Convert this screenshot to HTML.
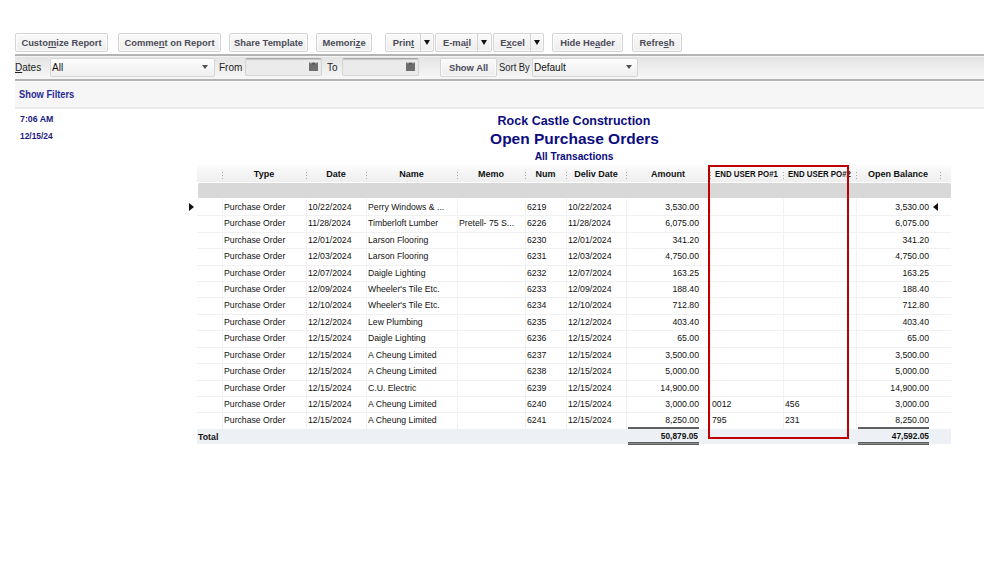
<!DOCTYPE html><html><head><meta charset="utf-8"><style>

html,body{margin:0;padding:0;background:#fff;width:999px;height:562px;overflow:hidden;position:relative;font-family:"Liberation Sans", sans-serif;}
div,span{box-sizing:border-box;}
.a{position:absolute;white-space:nowrap;}
.btn{position:absolute;height:19px;top:33px;border:1px solid #d4d4d4;border-radius:2px;background:linear-gradient(#fafafa,#ededed);box-shadow:inset 0 0 0 1px rgba(255,255,255,0.7);color:#4b4b57;font-weight:bold;font-size:9.4px;line-height:18px;text-align:center;}
.btn u{text-decoration:underline;}
.sep{position:absolute;top:0;bottom:0;width:1px;background:#d8d8d8;}
.dd{position:absolute;font-size:8px;color:#222;}
.t{position:absolute;font-size:8.7px;color:#111;white-space:nowrap;line-height:10px;}
.h{position:absolute;font-size:9px;font-weight:bold;color:#111;white-space:nowrap;line-height:10px;text-align:center;}
.dots{position:absolute;width:1px;height:9px;background:repeating-linear-gradient(#a8a8a8 0 1px,transparent 1px 3px);}

</style></head><body>
<div class="btn" style="left:15px;width:93px">Custo<u>m</u>ize Report</div>
<div class="btn" style="left:118px;width:103px">Comme<u>n</u>t on Report</div>
<div class="btn" style="left:229px;width:79px">Share Template</div>
<div class="btn" style="left:316px;width:56px">Memori<u>z</u>e</div>
<div class="btn" style="left:552px;width:71px">Hide He<u>a</u>der</div>
<div class="btn" style="left:632px;width:50px">Refre<u>s</u>h</div>
<div class="btn" style="left:385px;width:49px;text-align:left"><span class="a" style="left:0;width:35px;text-align:center">Prin<u>t</u></span><span class="a" style="left:34px;top:0;bottom:0;width:1px;background:#d4d4d4"></span><svg class="a" style="left:38px;top:6px" width="6" height="5" viewBox="0 0 6 5"><polygon points="0,0 6,0 3,5" fill="#111"/></svg></div>
<div class="btn" style="left:435px;width:57px;text-align:left"><span class="a" style="left:0;width:42px;text-align:center">E-ma<u>i</u>l</span><span class="a" style="left:41px;top:0;bottom:0;width:1px;background:#d4d4d4"></span><svg class="a" style="left:45px;top:6px" width="6" height="5" viewBox="0 0 6 5"><polygon points="0,0 6,0 3,5" fill="#111"/></svg></div>
<div class="btn" style="left:493px;width:51px;text-align:left"><span class="a" style="left:0;width:37px;text-align:center">E<u>x</u>cel</span><span class="a" style="left:36px;top:0;bottom:0;width:1px;background:#d4d4d4"></span><svg class="a" style="left:40px;top:6px" width="6" height="5" viewBox="0 0 6 5"><polygon points="0,0 6,0 3,5" fill="#111"/></svg></div>
<div class="a" style="left:15px;top:54px;width:969px;height:2px;background:#b4b4b4"></div>
<div class="a" style="left:15px;top:56px;width:969px;height:23px;background:linear-gradient(#e3e3e3,#f7f7f7)"></div>
<div class="a" style="left:15px;top:56px;width:969px;height:1px;background:#f4f4f4"></div>
<div class="a" style="left:15px;top:79px;width:969px;height:2px;background:#b4b4b4"></div>
<div class="a" style="left:15px;top:81px;width:969px;height:27px;background:#f6f6f6"></div>
<div class="a" style="left:15px;top:81px;width:969px;height:1px;background:#fbfbfb"></div>
<div class="a" style="left:15px;top:107px;width:969px;height:2px;background:#ebebeb"></div>
<div class="a" style="left:15px;top:62px;font-size:10px;color:#222;line-height:12px"><u>D</u>ates</div>
<div class="a" style="left:50px;top:58px;width:165px;height:19px;border:1px solid #d6d6d6;border-radius:2px;background:linear-gradient(#fdfdfd,#efefef)"></div>
<div class="a" style="left:52px;top:62px;font-size:10px;color:#111;line-height:12px">All</div>
<div class="a" style="left:202px;top:65px;width:0;height:0;border-left:3px solid transparent;border-right:3px solid transparent;border-top:4px solid #505050"></div>
<div class="a" style="left:219px;top:62px;font-size:10px;color:#222;line-height:12px">From</div>
<div class="a" style="left:245px;top:58px;width:77px;height:18px;border:1px solid #d4d4d4;border-top-color:#a8a8a8;border-radius:2px;background:#ebebeb;box-shadow:inset 0 1px 1px #c8c8c8"></div>
<svg class="a" style="left:309px;top:62px" width="9" height="9" viewBox="0 0 9 9"><rect x="0" y="0.5" width="9" height="8.5" fill="#6e6e6e"/><rect x="1.5" y="0" width="1" height="1.5" fill="#d8d8d8"/><rect x="6.5" y="0" width="1" height="1.5" fill="#d8d8d8"/><rect x="3" y="1" width="3" height="1.5" fill="#555"/></svg>
<div class="a" style="left:327px;top:62px;font-size:10px;color:#222;line-height:12px">To</div>
<div class="a" style="left:342px;top:58px;width:77px;height:18px;border:1px solid #d4d4d4;border-top-color:#a8a8a8;border-radius:2px;background:#ebebeb;box-shadow:inset 0 1px 1px #c8c8c8"></div>
<svg class="a" style="left:406px;top:62px" width="9" height="9" viewBox="0 0 9 9"><rect x="0" y="0.5" width="9" height="8.5" fill="#6e6e6e"/><rect x="1.5" y="0" width="1" height="1.5" fill="#d8d8d8"/><rect x="6.5" y="0" width="1" height="1.5" fill="#d8d8d8"/><rect x="3" y="1" width="3" height="1.5" fill="#555"/></svg>
<div class="btn" style="left:440px;top:58px;width:57px;height:19px;line-height:17px">Show All</div>
<div class="a" style="left:499px;top:62px;font-size:10px;color:#222;line-height:12px;transform:scaleX(0.94);transform-origin:0 0">Sort By</div>
<div class="a" style="left:532px;top:58px;width:106px;height:19px;border:1px solid #d6d6d6;border-radius:2px;background:linear-gradient(#fdfdfd,#efefef)"></div>
<div class="a" style="left:534px;top:62px;font-size:10px;color:#111;line-height:12px">Default</div>
<div class="a" style="left:626px;top:65px;width:0;height:0;border-left:3px solid transparent;border-right:3px solid transparent;border-top:4px solid #505050"></div>
<div class="a" style="left:19px;top:89px;font-size:10px;font-weight:bold;color:#2a2a95;line-height:12px;transform:scaleX(0.93);transform-origin:0 0">Show Filters</div>
<div class="a" style="left:20px;top:114px;font-size:8.8px;font-weight:bold;color:#1a1a80;line-height:10px">7:06 AM</div>
<div class="a" style="left:20px;top:131px;font-size:8.8px;font-weight:bold;color:#1a1a80;line-height:10px;transform:scaleX(0.955);transform-origin:0 0">12/15/24</div>
<div class="a" style="left:374px;width:400px;text-align:center;top:114px;font-size:12.5px;font-weight:bold;color:#0c0c7e;line-height:14px">Rock Castle Construction</div>
<div class="a" style="left:374.5px;width:400px;text-align:center;top:130px;font-size:15.5px;font-weight:bold;color:#0c0c7e;line-height:17px">Open Purchase Orders</div>
<div class="a" style="left:374px;width:400px;text-align:center;top:151px;font-size:10.2px;font-weight:bold;color:#0c0c7e;line-height:12px">All Transactions</div>
<div class="a" style="left:197px;top:165px;width:754px;height:17px;background:linear-gradient(#fcfcfc,#eeeeee)"></div>
<div class="a" style="left:198px;top:183px;width:753px;height:15px;background:#d8d8d8;border-radius:1.5px"></div>
<div class="h" style="left:224px;width:80px;top:169px">Type</div>
<div class="h" style="left:308px;width:56px;top:169px">Date</div>
<div class="h" style="left:368px;width:87px;top:169px">Name</div>
<div class="h" style="left:459px;width:64px;top:169px">Memo</div>
<div class="h" style="left:527px;width:37px;top:169px">Num</div>
<div class="h" style="left:568px;width:56px;top:169px">Deliv Date</div>
<div class="h" style="left:628px;width:80px;top:169px">Amount</div>
<div class="h" style="left:714.7px;top:169px;transform:scaleX(0.873);transform-origin:0 0">END USER PO#1</div>
<div class="h" style="left:788.3px;top:169px;transform:scaleX(0.873);transform-origin:0 0">END USER PO#2</div>
<div class="h" style="left:858px;width:80px;top:169px">Open Balance</div>
<div class="dots" style="left:222px;top:172px"></div>
<div class="dots" style="left:306px;top:172px"></div>
<div class="dots" style="left:366px;top:172px"></div>
<div class="dots" style="left:457px;top:172px"></div>
<div class="dots" style="left:525px;top:172px"></div>
<div class="dots" style="left:566px;top:172px"></div>
<div class="dots" style="left:626px;top:172px"></div>
<div class="dots" style="left:710px;top:172px"></div>
<div class="dots" style="left:783px;top:172px"></div>
<div class="dots" style="left:856px;top:172px"></div>
<div class="dots" style="left:940px;top:172px"></div>
<div class="a" style="left:197px;top:215px;width:754px;height:1px;background:#f1f1f1"></div>
<div class="t" style="left:224px;top:202px">Purchase Order</div>
<div class="t" style="left:308px;top:202px">10/22/2024</div>
<div class="t" style="left:368px;top:202px">Perry Windows & ...</div>
<div class="t" style="left:527px;top:202px">6219</div>
<div class="t" style="left:568px;top:202px">10/22/2024</div>
<div class="t" style="left:626px;width:73px;text-align:right;top:202px">3,530.00</div>
<div class="t" style="left:856px;width:73px;text-align:right;top:202px">3,530.00</div>
<div class="a" style="left:197px;top:232px;width:754px;height:1px;background:#f1f1f1"></div>
<div class="t" style="left:224px;top:218px">Purchase Order</div>
<div class="t" style="left:308px;top:218px">11/28/2024</div>
<div class="t" style="left:368px;top:218px">Timberloft Lumber</div>
<div class="t" style="left:459px;top:218px">Pretell- 75 S...</div>
<div class="t" style="left:527px;top:218px">6226</div>
<div class="t" style="left:568px;top:218px">11/28/2024</div>
<div class="t" style="left:626px;width:73px;text-align:right;top:218px">6,075.00</div>
<div class="t" style="left:856px;width:73px;text-align:right;top:218px">6,075.00</div>
<div class="a" style="left:197px;top:248px;width:754px;height:1px;background:#f1f1f1"></div>
<div class="t" style="left:224px;top:235px">Purchase Order</div>
<div class="t" style="left:308px;top:235px">12/01/2024</div>
<div class="t" style="left:368px;top:235px">Larson Flooring</div>
<div class="t" style="left:527px;top:235px">6230</div>
<div class="t" style="left:568px;top:235px">12/01/2024</div>
<div class="t" style="left:626px;width:73px;text-align:right;top:235px">341.20</div>
<div class="t" style="left:856px;width:73px;text-align:right;top:235px">341.20</div>
<div class="a" style="left:197px;top:265px;width:754px;height:1px;background:#f1f1f1"></div>
<div class="t" style="left:224px;top:251px">Purchase Order</div>
<div class="t" style="left:308px;top:251px">12/03/2024</div>
<div class="t" style="left:368px;top:251px">Larson Flooring</div>
<div class="t" style="left:527px;top:251px">6231</div>
<div class="t" style="left:568px;top:251px">12/03/2024</div>
<div class="t" style="left:626px;width:73px;text-align:right;top:251px">4,750.00</div>
<div class="t" style="left:856px;width:73px;text-align:right;top:251px">4,750.00</div>
<div class="a" style="left:197px;top:281px;width:754px;height:1px;background:#f1f1f1"></div>
<div class="t" style="left:224px;top:268px">Purchase Order</div>
<div class="t" style="left:308px;top:268px">12/07/2024</div>
<div class="t" style="left:368px;top:268px">Daigle Lighting</div>
<div class="t" style="left:527px;top:268px">6232</div>
<div class="t" style="left:568px;top:268px">12/07/2024</div>
<div class="t" style="left:626px;width:73px;text-align:right;top:268px">163.25</div>
<div class="t" style="left:856px;width:73px;text-align:right;top:268px">163.25</div>
<div class="a" style="left:197px;top:297px;width:754px;height:1px;background:#f1f1f1"></div>
<div class="t" style="left:224px;top:284px">Purchase Order</div>
<div class="t" style="left:308px;top:284px">12/09/2024</div>
<div class="t" style="left:368px;top:284px">Wheeler's Tile Etc.</div>
<div class="t" style="left:527px;top:284px">6233</div>
<div class="t" style="left:568px;top:284px">12/09/2024</div>
<div class="t" style="left:626px;width:73px;text-align:right;top:284px">188.40</div>
<div class="t" style="left:856px;width:73px;text-align:right;top:284px">188.40</div>
<div class="a" style="left:197px;top:314px;width:754px;height:1px;background:#f1f1f1"></div>
<div class="t" style="left:224px;top:300px">Purchase Order</div>
<div class="t" style="left:308px;top:300px">12/10/2024</div>
<div class="t" style="left:368px;top:300px">Wheeler's Tile Etc.</div>
<div class="t" style="left:527px;top:300px">6234</div>
<div class="t" style="left:568px;top:300px">12/10/2024</div>
<div class="t" style="left:626px;width:73px;text-align:right;top:300px">712.80</div>
<div class="t" style="left:856px;width:73px;text-align:right;top:300px">712.80</div>
<div class="a" style="left:197px;top:330px;width:754px;height:1px;background:#f1f1f1"></div>
<div class="t" style="left:224px;top:317px">Purchase Order</div>
<div class="t" style="left:308px;top:317px">12/12/2024</div>
<div class="t" style="left:368px;top:317px">Lew Plumbing</div>
<div class="t" style="left:527px;top:317px">6235</div>
<div class="t" style="left:568px;top:317px">12/12/2024</div>
<div class="t" style="left:626px;width:73px;text-align:right;top:317px">403.40</div>
<div class="t" style="left:856px;width:73px;text-align:right;top:317px">403.40</div>
<div class="a" style="left:197px;top:347px;width:754px;height:1px;background:#f1f1f1"></div>
<div class="t" style="left:224px;top:333px">Purchase Order</div>
<div class="t" style="left:308px;top:333px">12/15/2024</div>
<div class="t" style="left:368px;top:333px">Daigle Lighting</div>
<div class="t" style="left:527px;top:333px">6236</div>
<div class="t" style="left:568px;top:333px">12/15/2024</div>
<div class="t" style="left:626px;width:73px;text-align:right;top:333px">65.00</div>
<div class="t" style="left:856px;width:73px;text-align:right;top:333px">65.00</div>
<div class="a" style="left:197px;top:363px;width:754px;height:1px;background:#f1f1f1"></div>
<div class="t" style="left:224px;top:350px">Purchase Order</div>
<div class="t" style="left:308px;top:350px">12/15/2024</div>
<div class="t" style="left:368px;top:350px">A Cheung Limited</div>
<div class="t" style="left:527px;top:350px">6237</div>
<div class="t" style="left:568px;top:350px">12/15/2024</div>
<div class="t" style="left:626px;width:73px;text-align:right;top:350px">3,500.00</div>
<div class="t" style="left:856px;width:73px;text-align:right;top:350px">3,500.00</div>
<div class="a" style="left:197px;top:380px;width:754px;height:1px;background:#f1f1f1"></div>
<div class="t" style="left:224px;top:366px">Purchase Order</div>
<div class="t" style="left:308px;top:366px">12/15/2024</div>
<div class="t" style="left:368px;top:366px">A Cheung Limited</div>
<div class="t" style="left:527px;top:366px">6238</div>
<div class="t" style="left:568px;top:366px">12/15/2024</div>
<div class="t" style="left:626px;width:73px;text-align:right;top:366px">5,000.00</div>
<div class="t" style="left:856px;width:73px;text-align:right;top:366px">5,000.00</div>
<div class="a" style="left:197px;top:396px;width:754px;height:1px;background:#f1f1f1"></div>
<div class="t" style="left:224px;top:383px">Purchase Order</div>
<div class="t" style="left:308px;top:383px">12/15/2024</div>
<div class="t" style="left:368px;top:383px">C.U. Electric</div>
<div class="t" style="left:527px;top:383px">6239</div>
<div class="t" style="left:568px;top:383px">12/15/2024</div>
<div class="t" style="left:626px;width:73px;text-align:right;top:383px">14,900.00</div>
<div class="t" style="left:856px;width:73px;text-align:right;top:383px">14,900.00</div>
<div class="a" style="left:197px;top:412px;width:754px;height:1px;background:#f1f1f1"></div>
<div class="t" style="left:224px;top:399px">Purchase Order</div>
<div class="t" style="left:308px;top:399px">12/15/2024</div>
<div class="t" style="left:368px;top:399px">A Cheung Limited</div>
<div class="t" style="left:527px;top:399px">6240</div>
<div class="t" style="left:568px;top:399px">12/15/2024</div>
<div class="t" style="left:626px;width:73px;text-align:right;top:399px">3,000.00</div>
<div class="t" style="left:712px;top:399px">0012</div>
<div class="t" style="left:785px;top:399px">456</div>
<div class="t" style="left:856px;width:73px;text-align:right;top:399px">3,000.00</div>
<div class="a" style="left:197px;top:429px;width:754px;height:1px;background:#f1f1f1"></div>
<div class="t" style="left:224px;top:415px">Purchase Order</div>
<div class="t" style="left:308px;top:415px">12/15/2024</div>
<div class="t" style="left:368px;top:415px">A Cheung Limited</div>
<div class="t" style="left:527px;top:415px">6241</div>
<div class="t" style="left:568px;top:415px">12/15/2024</div>
<div class="t" style="left:626px;width:73px;text-align:right;top:415px">8,250.00</div>
<div class="t" style="left:712px;top:415px">795</div>
<div class="t" style="left:785px;top:415px">231</div>
<div class="t" style="left:856px;width:73px;text-align:right;top:415px">8,250.00</div>
<div class="a" style="left:222px;top:199px;width:1px;height:230px;background:#f1f1f1"></div>
<div class="a" style="left:306px;top:199px;width:1px;height:230px;background:#f1f1f1"></div>
<div class="a" style="left:366px;top:199px;width:1px;height:230px;background:#f1f1f1"></div>
<div class="a" style="left:457px;top:199px;width:1px;height:230px;background:#f1f1f1"></div>
<div class="a" style="left:525px;top:199px;width:1px;height:230px;background:#f1f1f1"></div>
<div class="a" style="left:566px;top:199px;width:1px;height:230px;background:#f1f1f1"></div>
<div class="a" style="left:626px;top:199px;width:1px;height:230px;background:#f1f1f1"></div>
<div class="a" style="left:710px;top:199px;width:1px;height:230px;background:#f1f1f1"></div>
<div class="a" style="left:783px;top:199px;width:1px;height:230px;background:#f1f1f1"></div>
<div class="a" style="left:856px;top:199px;width:1px;height:230px;background:#f1f1f1"></div>
<div class="a" style="left:189px;top:203px;width:0;height:0;border-top:4px solid transparent;border-bottom:4px solid transparent;border-left:5px solid #111"></div>
<div class="a" style="left:933px;top:203px;width:0;height:0;border-top:4px solid transparent;border-bottom:4px solid transparent;border-right:5px solid #111"></div>
<div class="a" style="left:197px;top:429px;width:754px;height:15px;background:#edf1f5"></div>
<div class="a" style="left:198px;top:432px;font-size:8.8px;font-weight:bold;color:#111;line-height:10px">Total</div>
<div class="t" style="left:626px;width:72px;text-align:right;top:431px;font-size:9.2px;font-weight:bold;color:#111;transform:scaleX(0.91);transform-origin:100% 0">50,879.05</div>
<div class="t" style="left:857px;width:72px;text-align:right;top:431px;font-size:9.2px;font-weight:bold;color:#111;transform:scaleX(0.91);transform-origin:100% 0">47,592.05</div>
<div class="a" style="left:628px;top:427px;width:71px;height:2px;background:#606060"></div>
<div class="a" style="left:628px;top:442px;width:71px;height:3px;background:linear-gradient(#606060 0 1px,#8a8a8a 1px 2px,#606060 2px 3px)"></div>
<div class="a" style="left:858px;top:427px;width:71px;height:2px;background:#606060"></div>
<div class="a" style="left:858px;top:442px;width:71px;height:3px;background:linear-gradient(#606060 0 1px,#8a8a8a 1px 2px,#606060 2px 3px)"></div>
<div class="a" style="left:708px;top:165px;width:141px;height:274px;border:2px solid #c00000"></div>
</body></html>
